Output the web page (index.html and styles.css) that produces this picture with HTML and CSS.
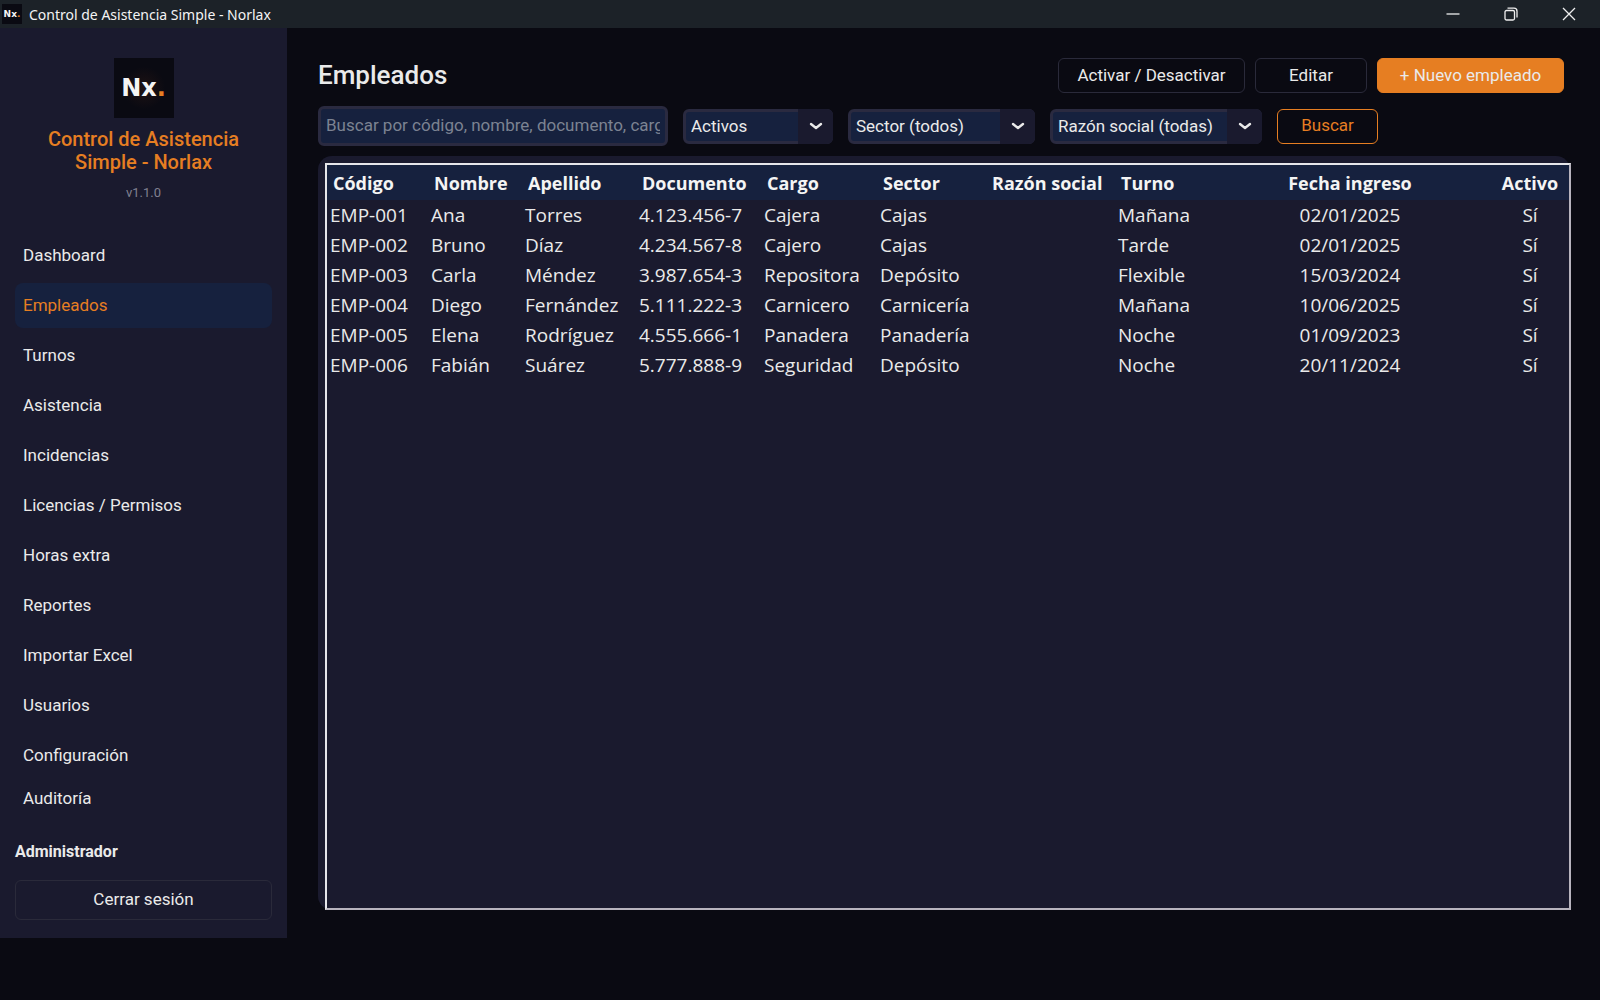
FILE: index.html
```html
<!DOCTYPE html>
<html lang="es">
<head>
    <meta charset="UTF-8">
    <meta name="viewport" content="width=device-width, initial-scale=1.0">
    <title>Control de Asistencia Simple - Norlax</title>
    <link rel="stylesheet" href="styles.css">
</head>
<body>
    <header class="titlebar">
        <span class="app-icon">Nx<i>.</i></span>
        <span class="app-name">Control de Asistencia Simple - Norlax</span>
        <div class="window-buttons">
            <button type="button" aria-label="Minimizar">
                <svg width="14" height="14" viewBox="0 0 14 14"><path d="M0.5 7h13"/></svg>
            </button>
            <button type="button" aria-label="Restaurar">
                <svg width="14" height="14" viewBox="0 0 14 14"><rect x="1" y="3.5" width="9.5" height="9.5" rx="1.5"/><path d="M3.5 1.2h6.5a3 3 0 0 1 3 3v6.3"/></svg>
            </button>
            <button type="button" aria-label="Cerrar">
                <svg width="14" height="14" viewBox="0 0 14 14"><path d="M1 1l12 12M13 1L1 13"/></svg>
            </button>
        </div>
    </header>

    <div class="app">
        <aside class="sidebar">
            <div class="logo"><span>Nx<i>.</i></span></div>
            <h1 class="brand">Control de Asistencia<br>Simple - Norlax</h1>
            <p class="version">v1.1.0</p>

            <nav class="nav">
                <a href="#dashboard">Dashboard</a>
                <a href="#empleados" class="active">Empleados</a>
                <a href="#turnos">Turnos</a>
                <a href="#asistencia">Asistencia</a>
                <a href="#incidencias">Incidencias</a>
                <a href="#licencias">Licencias / Permisos</a>
                <a href="#horas">Horas extra</a>
                <a href="#reportes">Reportes</a>
                <a href="#importar">Importar Excel</a>
                <a href="#usuarios">Usuarios</a>
                <a href="#configuracion">Configuración</a>
                <a href="#auditoria" class="short">Auditoría</a>
            </nav>

            <div class="session">
                <p class="user">Administrador</p>
                <button type="button" class="btn logout">Cerrar sesión</button>
            </div>
        </aside>

        <main class="main">
            <div class="page-head">
                <h2>Empleados</h2>
                <button type="button" class="btn wide">Activar / Desactivar</button>
                <button type="button" class="btn">Editar</button>
                <button type="button" class="btn primary wide">+ Nuevo empleado</button>
            </div>

            <form class="filters">
                <input class="search" type="text" aria-label="Buscar empleado" placeholder="Buscar por código, nombre, documento, cargo...">
                <div class="select estado">
                    <select aria-label="Estado"><option>Activos</option></select>
                    <span class="arrow"><svg width="14" height="8" viewBox="0 0 14 8"><path d="M2 2l5 4l5 -4"/></svg></span>
                </div>
                <div class="select sector">
                    <select aria-label="Sector"><option>Sector (todos)</option></select>
                    <span class="arrow"><svg width="14" height="8" viewBox="0 0 14 8"><path d="M2 2l5 4l5 -4"/></svg></span>
                </div>
                <div class="select razon">
                    <select aria-label="Razón social"><option>Razón social (todas)</option></select>
                    <span class="arrow"><svg width="14" height="8" viewBox="0 0 14 8"><path d="M2 2l5 4l5 -4"/></svg></span>
                </div>
                <button type="button" class="btn outline">Buscar</button>
            </form>

            <section class="panel">
                <div class="table-frame">
                    <table>
                        <colgroup>
                            <col class="c-codigo">
                            <col class="c-nombre">
                            <col class="c-apellido">
                            <col class="c-documento">
                            <col class="c-cargo">
                            <col class="c-sector">
                            <col class="c-razon">
                            <col class="c-turno">
                            <col class="c-fecha">
                            <col class="c-activo">
                        </colgroup>
                        <thead>
                            <tr>
                                <th>Código</th>
                                <th>Nombre</th>
                                <th>Apellido</th>
                                <th>Documento</th>
                                <th>Cargo</th>
                                <th>Sector</th>
                                <th>Razón social</th>
                                <th>Turno</th>
                                <th class="center">Fecha ingreso</th>
                                <th class="center">Activo</th>
                            </tr>
                        </thead>
                        <tbody>
                            <tr><td>EMP-001</td><td>Ana</td><td>Torres</td><td>4.123.456-7</td><td>Cajera</td><td>Cajas</td><td></td><td>Mañana</td><td class="center">02/01/2025</td><td class="center">Sí</td></tr>
                            <tr><td>EMP-002</td><td>Bruno</td><td>Díaz</td><td>4.234.567-8</td><td>Cajero</td><td>Cajas</td><td></td><td>Tarde</td><td class="center">02/01/2025</td><td class="center">Sí</td></tr>
                            <tr><td>EMP-003</td><td>Carla</td><td>Méndez</td><td>3.987.654-3</td><td>Repositora</td><td>Depósito</td><td></td><td>Flexible</td><td class="center">15/03/2024</td><td class="center">Sí</td></tr>
                            <tr><td>EMP-004</td><td>Diego</td><td>Fernández</td><td>5.111.222-3</td><td>Carnicero</td><td>Carnicería</td><td></td><td>Mañana</td><td class="center">10/06/2025</td><td class="center">Sí</td></tr>
                            <tr><td>EMP-005</td><td>Elena</td><td>Rodríguez</td><td>4.555.666-1</td><td>Panadera</td><td>Panadería</td><td></td><td>Noche</td><td class="center">01/09/2023</td><td class="center">Sí</td></tr>
                            <tr><td>EMP-006</td><td>Fabián</td><td>Suárez</td><td>5.777.888-9</td><td>Seguridad</td><td>Depósito</td><td></td><td>Noche</td><td class="center">20/11/2024</td><td class="center">Sí</td></tr>
                        </tbody>
                    </table>
                </div>
            </section>
        </main>
    </div>
</body>
</html>
```
FILE: styles.css
```css
* {
    box-sizing: border-box;
}

body {
    margin: 0;
    min-height: 100vh;
    display: flex;
    flex-direction: column;
    background-color: #0a0a12;
    color: #eaeaea;
    font-family: Roboto, sans-serif;
    font-size: 17px;
}

h1, h2, p {
    margin: 0;
}

button, input, select {
    font: inherit;
    color: inherit;
}

/* barra de la ventana */
.titlebar {
    display: flex;
    align-items: center;
    height: 28px;
    padding: 0 2px;
    background-color: #1c2228;
    color: #f4f4f4;
    font-family: "Noto Sans", sans-serif;
    font-size: 14px;
}

.app-icon {
    width: 20px;
    line-height: 20px;
    margin-right: 7px;
    background-color: #0a0a12;
    font-family: "DejaVu Sans", sans-serif;
    font-weight: bold;
    font-size: 9px;
    text-align: center;
}

.app-icon i, .logo i {
    font-style: normal;
    color: #e67e22;
}

.window-buttons {
    display: flex;
    margin-left: auto;
}

.window-buttons button {
    width: 58px;
    height: 28px;
    padding: 0;
    border: none;
    background: none;
}

.window-buttons svg {
    display: block;
    margin: 0 auto;
    fill: none;
    stroke: #eeeeee;
    stroke-width: 1.3;
}

.app {
    flex: 1;
    display: flex;
    margin-bottom: 62px;
}

/* menú lateral */
.sidebar {
    flex: none;
    display: flex;
    flex-direction: column;
    width: 287px;
    padding: 30px 15px 18px;
    background-color: #1a1a2e;
}

.logo {
    align-self: center;
    width: 60px;
    height: 60px;
    line-height: 60px;
    background: radial-gradient(circle, #1d1214, #0a0a12 50%);
    color: #f4f4f4;
    font-family: "DejaVu Sans", sans-serif;
    font-weight: bold;
    font-size: 24px;
    text-align: center;
}

.brand {
    margin-top: 10px;
    color: #e67e22;
    font-size: 20px;
    font-weight: 500;
    line-height: 23px;
    text-align: center;
}

.version {
    margin-top: 10px;
    color: #808090;
    font-size: 13px;
    line-height: 18px;
    text-align: center;
}

.nav {
    display: flex;
    flex-direction: column;
    gap: 5px;
    margin-top: 31px;
}

.nav a {
    height: 45px;
    padding-left: 8px;
    border-radius: 8px;
    color: #eaeaea;
    line-height: 45px;
    text-decoration: none;
}

.nav a.active {
    background-color: #16213e;
    color: #e67e22;
}

.nav a.short {
    height: 30px;
    line-height: 30px;
}

.session {
    margin-top: auto;
}

.user {
    margin-bottom: 18px;
    font-size: 16px;
    font-weight: 700;
    line-height: 20px;
}

.btn {
    width: 112px;
    height: 35px;
    padding: 0 0 2px;
    border: 1px solid #2a2a3a;
    border-radius: 6px;
    background: none;
}

.btn.wide {
    width: 187px;
}

.btn.primary {
    border-color: #e67e22;
    background-color: #e67e22;
}

.btn.outline {
    width: 101px;
    border-color: #e67e22;
    color: #e67e22;
}

.btn.logout {
    width: 100%;
    height: 40px;
}

/* contenido */
.main {
    flex: 1;
    min-width: 0;
    display: flex;
    flex-direction: column;
    padding: 30px 30px 28px 31px;
}

.page-head {
    display: flex;
    align-items: center;
    gap: 10px;
    padding-right: 6px;
}

.page-head h2 {
    margin-right: auto;
    font-size: 26px;
    font-weight: 500;
    line-height: 35px;
}

.filters {
    display: flex;
    align-items: center;
    gap: 15px;
    margin-top: 13px;
}

.search {
    width: 350px;
    height: 40px;
    padding: 0 5px 2px;
    border: 3px solid #2a2a40;
    border-radius: 6px;
    background-color: #16213e;
    outline: none;
}

.search::placeholder {
    color: #7c8392;
    opacity: 1;
}

.select {
    position: relative;
}

.select select {
    width: 100%;
    height: 35px;
    padding: 0 36px 0 5px;
    border: 3px solid #2a2a40;
    border-radius: 6px;
    background-color: #16213e;
    appearance: none;
    display: block;
}

.estado {
    width: 150px;
}

.sector {
    width: 187px;
}

.razon {
    width: 212px;
}

.arrow {
    position: absolute;
    top: 0;
    right: 0;
    bottom: 0;
    width: 35px;
    display: flex;
    align-items: center;
    justify-content: center;
    border-radius: 0 6px 6px 0;
    background-color: #1a1a2e;
    pointer-events: none;
}

.arrow svg {
    fill: none;
    stroke: #eaeaea;
    stroke-width: 2.4;
    stroke-linecap: round;
    stroke-linejoin: round;
}

.panel {
    flex: 1;
    display: flex;
    margin-top: 10px;
    padding: 7px 0 0 7px;
    border-radius: 14px;
    background-color: #1a1a2e;
}

.table-frame {
    flex: 1;
    border: 2px solid;
    border-color: #e6e6ea #b8b4be #b8b4be #e6e6ea;
    background-color: #1a1a2e;
}

table {
    width: 100%;
    border-collapse: collapse;
    table-layout: fixed;
    font-family: "Open Sans", sans-serif;
    font-size: 19px;
}

.c-codigo { width: 101px; }
.c-nombre { width: 94px; }
.c-apellido { width: 114px; }
.c-documento { width: 125px; }
.c-cargo { width: 116px; }
.c-sector { width: 109px; }
.c-razon { width: 129px; }
.c-turno { width: 94px; }
.c-fecha { width: 282px; }
.c-activo { width: 78px; }

th, td {
    padding: 0 0 0 3px;
    text-align: left;
    white-space: nowrap;
}

th {
    height: 35px;
    padding-left: 6px;
    background-color: #16213e;
    color: #f4f4f4;
    font-size: 18px;
    font-weight: 700;
}

td {
    height: 30px;
    line-height: 30px;
}

th.center, td.center {
    padding: 0;
    text-align: center;
}
```
